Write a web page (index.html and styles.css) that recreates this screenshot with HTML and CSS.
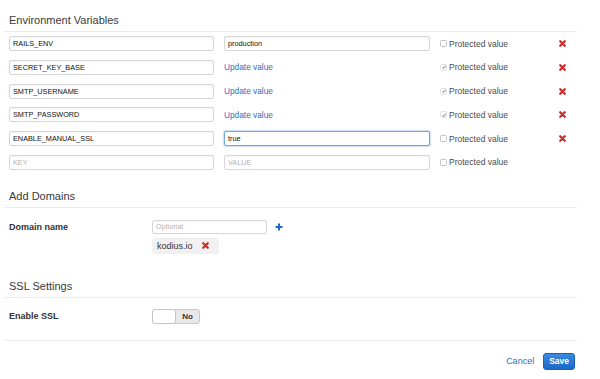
FILE: index.html
```html
<!DOCTYPE html>
<html lang="en">
<head>
    <meta charset="UTF-8">
    <title>App Settings</title>
    <link rel="stylesheet" href="styles.css">
</head>
<body>
    <div class="page">
        <section class="section">
            <h2 class="section-title">Environment Variables</h2>
            <div class="env-list">
                <div class="env-row">
                    <input class="field" type="text" value="RAILS_ENV">
                    <input class="field" type="text" value="production">
                    <label class="protect"><span class="check"></span>Protected value</label>
                    <span class="remove"><svg viewBox="0 0 8 8"><path d="M1.4 1.4L6.6 6.6M6.6 1.4L1.4 6.6"/></svg></span>
                </div>
                <div class="env-row">
                    <input class="field" type="text" value="SECRET_KEY_BASE">
                    <a class="update-link" href="#">Update value</a>
                    <label class="protect"><span class="check is-checked"></span>Protected value</label>
                    <span class="remove"><svg viewBox="0 0 8 8"><path d="M1.4 1.4L6.6 6.6M6.6 1.4L1.4 6.6"/></svg></span>
                </div>
                <div class="env-row">
                    <input class="field" type="text" value="SMTP_USERNAME">
                    <a class="update-link" href="#">Update value</a>
                    <label class="protect"><span class="check is-checked"></span>Protected value</label>
                    <span class="remove"><svg viewBox="0 0 8 8"><path d="M1.4 1.4L6.6 6.6M6.6 1.4L1.4 6.6"/></svg></span>
                </div>
                <div class="env-row">
                    <input class="field" type="text" value="SMTP_PASSWORD">
                    <a class="update-link" href="#">Update value</a>
                    <label class="protect"><span class="check is-checked"></span>Protected value</label>
                    <span class="remove"><svg viewBox="0 0 8 8"><path d="M1.4 1.4L6.6 6.6M6.6 1.4L1.4 6.6"/></svg></span>
                </div>
                <div class="env-row">
                    <input class="field" type="text" value="ENABLE_MANUAL_SSL">
                    <input class="field is-focused" type="text" value="true">
                    <label class="protect"><span class="check"></span>Protected value</label>
                    <span class="remove"><svg viewBox="0 0 8 8"><path d="M1.4 1.4L6.6 6.6M6.6 1.4L1.4 6.6"/></svg></span>
                </div>
                <div class="env-row">
                    <input class="field" type="text" placeholder="KEY">
                    <input class="field" type="text" placeholder="VALUE">
                    <label class="protect"><span class="check"></span>Protected value</label>
                </div>
            </div>
        </section>

        <section class="section">
            <h2 class="section-title">Add Domains</h2>
            <div class="form-row domain-row">
                <span class="form-label">Domain name</span>
                <div class="form-control">
                    <div class="domain-input">
                        <input class="field domain-field" type="text" placeholder="Optional">
                        <span class="add"><svg viewBox="0 0 8 8"><rect x="3" y="0.5" width="2" height="7"/><rect x="0.5" y="3" width="7" height="2"/></svg></span>
                    </div>
                    <span class="tag">kodius.io<span class="remove"><svg viewBox="0 0 8 8"><path d="M1.4 1.4L6.6 6.6M6.6 1.4L1.4 6.6"/></svg></span></span>
                </div>
            </div>
        </section>

        <section class="section ssl-section">
            <h2 class="section-title">SSL Settings</h2>
            <div class="form-row ssl-row">
                <span class="form-label">Enable SSL</span>
                <div class="form-control">
                    <span class="toggle"><span class="toggle-knob"></span><span class="toggle-text">No</span></span>
                </div>
            </div>
        </section>

        <div class="actions">
            <a class="cancel" href="#">Cancel</a>
            <button class="save" type="button">Save</button>
        </div>
    </div>
</body>
</html>
```

FILE: styles.css
```css
html, body {
    margin: 0;
    padding: 0;
    background: #fff;
    font-family: 'Liberation Sans', Arial, sans-serif;
    color: #333;
}
.page {
    width: 573px;
    padding: 0 0 0 4px;
}
.section-title {
    margin: 0;
    padding: 14px 0 4px 5px;
    font-size: 11px;
    line-height: 13px;
    font-weight: normal;
    color: #3a3a3a;
    border-bottom: 1px solid #ececec;
}
.section + .section .section-title {
    margin-top: 20px;
    padding-top: 0;
}
.ssl-section .section-title {
    margin-top: 26px !important;
}
.env-list {
    display: flex;
    flex-direction: column;
    gap: 8.8px;
    padding: 4px 0 0 5px;
}
.env-row {
    display: grid;
    grid-template-columns: 205px 206px 109px 7px;
    column-gap: 10px;
    align-items: center;
    height: 15px;
}
.field {
    box-sizing: border-box;
    height: 15px;
    width: 100%;
    margin: 0;
    padding: 0 3px;
    border: 1px solid #d6d6d6;
    border-radius: 2px;
    box-shadow: inset 0 1px 1px rgba(0,0,0,0.04);
    font-family: 'Liberation Sans', Arial, sans-serif;
    font-size: 7.3px;
    color: #111;
    outline: none;
}
.field::placeholder {
    color: #b3b3b3;
}
.field.is-focused {
    border-color: #6ea6e6;
    box-shadow: 0 0 1px 1px rgba(102,160,230,0.35);
}
.update-link {
    font-size: 8.3px;
    color: #2a70c0;
    text-decoration: none;
}
.protect {
    display: flex;
    align-items: center;
    font-size: 8.5px;
    color: #4a4a4a;
    white-space: nowrap;
}
.check {
    box-sizing: border-box;
    width: 7px;
    height: 7px;
    margin-right: 2px;
    border: 1px solid #c4c4c4;
    border-radius: 1.5px;
    background: #fff;
    position: relative;
}
.check.is-checked {
    border-color: #e2e2e2;
}
.check.is-checked::after {
    content: "";
    position: absolute;
    left: 1.6px;
    top: 0.2px;
    width: 1.4px;
    height: 3.2px;
    border: solid #9a9a9a;
    border-width: 0 0.8px 0.8px 0;
    transform: rotate(40deg);
}
.remove svg {
    display: block;
    width: 7px;
    height: 7px;
    fill: none;
    stroke: #c62a26;
    stroke-width: 2.5;
    stroke-linecap: round;
}
.add svg {
    display: block;
    width: 8px;
    height: 8px;
    fill: #1d6cc2;
}
.form-row {
    display: grid;
    grid-template-columns: 143px auto;
    padding-left: 5px;
}
.form-label {
    font-size: 9px;
    font-weight: bold;
    color: #333;
}
.domain-row {
    padding-top: 12px;
}
.domain-row .form-label {
    line-height: 14px;
}
.domain-input {
    display: flex;
    align-items: center;
    gap: 8px;
}
.domain-field {
    width: 115px;
    height: 14px;
}
.form-control {
    display: flex;
    flex-direction: column;
    align-items: flex-start;
}
.tag {
    display: flex;
    align-items: center;
    gap: 9px;
    height: 16px;
    margin-top: 4px;
    padding: 0 10px 0 5px;
    background: #f1f1f1;
    border-radius: 3px;
    font-size: 9px;
    color: #333;
}
.ssl-section {
    border-bottom: 1px solid #ededed;
    padding-bottom: 16px;
}
.ssl-row {
    padding-top: 11px;
}
.ssl-row .form-label {
    line-height: 15px;
}
.toggle {
    box-sizing: border-box;
    display: flex;
    width: 48px;
    height: 15px;
    border: 1px solid #c9c9c9;
    border-radius: 3px;
    background: #e8e8e8;
}
.toggle-knob {
    box-sizing: border-box;
    width: 24px;
    height: 15px;
    margin: -1px 0 0 -1px;
    border: 1px solid #c6c6c6;
    border-radius: 3px;
    background: #fff;
}
.toggle-text {
    flex: 1;
    text-align: center;
    font-size: 8px;
    font-weight: bold;
    line-height: 13px;
    color: #333;
}
.actions {
    display: flex;
    justify-content: flex-end;
    align-items: center;
    gap: 9px;
    padding: 12px 2px 0 0;
}
.cancel {
    font-size: 9px;
    color: #2a70c0;
    text-decoration: none;
}
.save {
    height: 17px;
    padding: 0 5px;
    border: 1px solid #1b5fae;
    border-radius: 3px;
    background: linear-gradient(#3a8ae0, #1a69c8);
    color: #fff;
    font-family: 'Liberation Sans', Arial, sans-serif;
    font-size: 8.5px;
    font-weight: bold;
}
```
